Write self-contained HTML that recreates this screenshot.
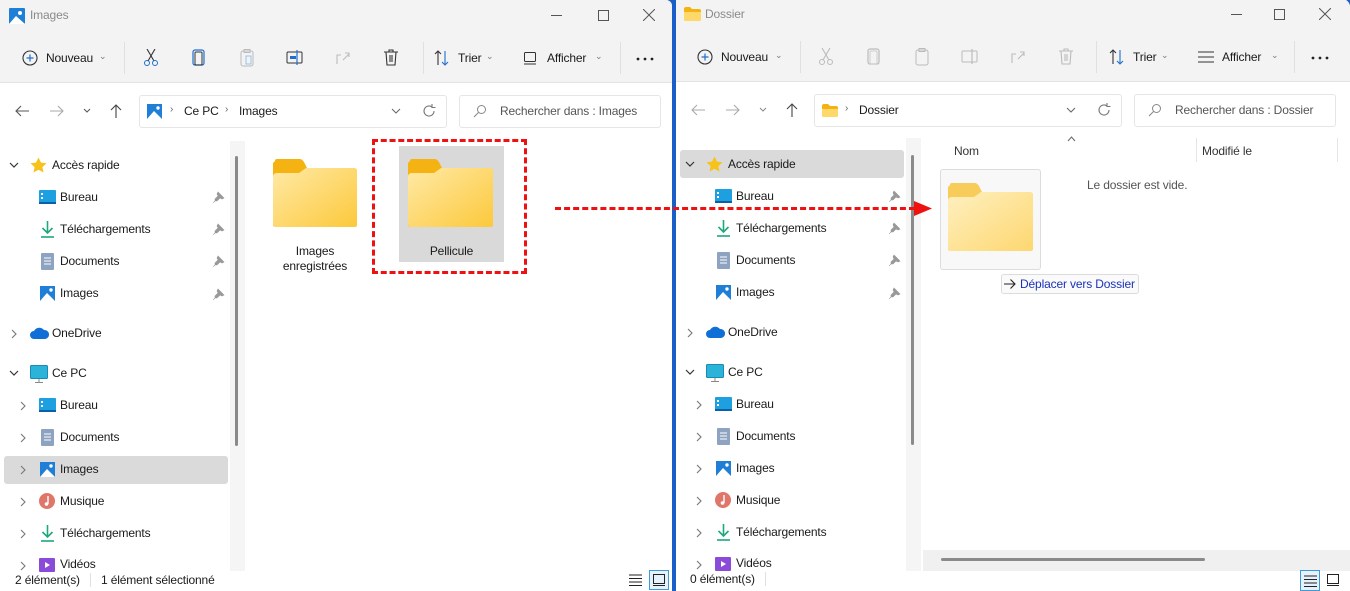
<!DOCTYPE html>
<html><head><meta charset="utf-8">
<style>
*{box-sizing:border-box;margin:0;padding:0}
body{width:1350px;height:591px;overflow:hidden;background:#1a5fc8;font-family:"Liberation Sans",sans-serif;font-size:12px;letter-spacing:-0.15px;color:#1a1a1a;position:relative}
.win{position:absolute;overflow:hidden;background:#fff}
.a{position:absolute;white-space:nowrap;margin-top:1px}
.bar{position:absolute;left:0;right:0;background:#f3f3f3}
.sep{position:absolute;width:1px;background:#e0e0e0}
svg{display:block}
.g{color:#7a7a7a}
</style></head><body>

<!-- ================= LEFT WINDOW ================= -->
<div class="win" style="left:0;top:0;width:672px;height:591px;border-top-right-radius:6px">
  <div class="bar" style="top:0;height:83px;border-bottom:1px solid #e3e3e3"></div>
  <div class="a" style="left:9px;top:7px"><svg width="16" height="16"><rect x="0" y="0" width="16" height="16" rx="1" fill="#1f7ed6"/><path d="M0 16 L7 8 L16 16Z" fill="#fff"/><circle cx="11" cy="5" r="2" fill="#fff"/></svg></div>
  <div class="a g" style="left:30px;top:7px;font-size:12px;color:#8a8a8a">Images</div>
  <div class="a" style="left:551px;top:14px;width:11px;height:1px;background:#555"></div>
  <div class="a" style="left:598px;top:9px;width:11px;height:11px;border:1px solid #555"></div>
  <div class="a" style="left:643px;top:8px"><svg width="12" height="12"><path d="M0 0L12 12M12 0L0 12" stroke="#555" stroke-width="1"/></svg></div>
  <div class="a" style="left:22px;top:49px"><svg width="16" height="16"><circle cx="8" cy="8" r="7" fill="none" stroke="#333" stroke-width="1.1"/><path d="M8 4.5V11.5M4.5 8H11.5" stroke="#1f6fd0" stroke-width="1.2"/></svg></div>
  <div class="a" style="left:46px;top:50px">Nouveau</div>
  <div class="a g" style="left:99px;top:50px;font-size:9px">&#8964;</div>
  <div class="sep" style="left:124px;top:42px;height:32px"></div>
  <div class="a" style="left:143px;top:48px"><svg width="16" height="18"><path d="M4 0L11 12M12 0L5 12" stroke="#333" stroke-width="1.1"/><circle cx="4" cy="14" r="2.5" fill="none" stroke="#1f6fd0"/><circle cx="12" cy="14" r="2.5" fill="none" stroke="#1f6fd0"/></svg></div>
  <div class="a" style="left:192px;top:48px"><svg width="14" height="18"><rect x="1" y="1" width="11" height="15" rx="2" fill="none" stroke="#1f6fd0" stroke-width="1.2"/><rect x="3" y="3" width="7" height="13" rx="1" fill="none" stroke="#333"/></svg></div>
  <div class="a" style="left:240px;top:48px"><svg width="14" height="18"><rect x="1" y="2" width="12" height="15" rx="2" fill="none" stroke="#bbb"/><rect x="4" y="0.5" width="6" height="3" fill="none" stroke="#bbb"/><rect x="6" y="7" width="5" height="8" fill="none" stroke="#9cc0ea"/></svg></div>
  <div class="a" style="left:286px;top:49px"><svg width="18" height="16"><rect x="1" y="2" width="15" height="11" rx="1" fill="none" stroke="#333"/><rect x="4" y="6" width="6" height="3" fill="#1f6fd0"/><path d="M11 0V15" stroke="#1f6fd0" stroke-width="1.2"/></svg></div>
  <div class="a" style="left:335px;top:49px"><svg width="16" height="16"><path d="M2 14V5H6M8 10L14 4M10 3H14V7" fill="none" stroke="#bbb" stroke-width="1.1"/></svg></div>
  <div class="a" style="left:384px;top:48px"><svg width="14" height="18"><path d="M0 3H14M5 3V1H9V3M2 3L3 16H11L12 3M6 6V13M8 6V13" fill="none" stroke="#333" stroke-width="1.1"/></svg></div>
  <div class="sep" style="left:423px;top:42px;height:32px"></div>
  <div class="a" style="left:434px;top:49px"><svg width="16" height="16"><path d="M4 15V1M1 4L4 1L7 4" fill="none" stroke="#333" stroke-width="1.1"/><path d="M11 1V15M8 12L11 15L14 12" fill="none" stroke="#1f6fd0" stroke-width="1.1"/></svg></div>
  <div class="a" style="left:458px;top:50px">Trier</div>
  <div class="a g" style="left:486px;top:50px;font-size:9px">&#8964;</div>
  <div class="a" style="left:523px;top:50px"><svg width="14" height="14"><rect x="1.5" y="1.5" width="11" height="9" rx="1" fill="none" stroke="#333"/><path d="M1 13H13" stroke="#333"/></svg></div>
  <div class="a" style="left:547px;top:50px">Afficher</div>
  <div class="a g" style="left:595px;top:50px;font-size:9px">&#8964;</div>
  <div class="sep" style="left:620px;top:42px;height:32px"></div>
  <div class="a" style="left:636px;top:56px"><svg width="18" height="4"><circle cx="2" cy="2" r="1.4" fill="#222"/><circle cx="9" cy="2" r="1.4" fill="#222"/><circle cx="16" cy="2" r="1.4" fill="#222"/></svg></div>
  <div class="a" style="left:14px;top:104px"><svg width="16" height="12"><path d="M15 6H2M7 1L2 6L7 11" fill="none" stroke="#555" stroke-width="1.1"/></svg></div>
  <div class="a" style="left:49px;top:104px"><svg width="16" height="12"><path d="M1 6H14M9 1L14 6L9 11" fill="none" stroke="#aaa" stroke-width="1.1"/></svg></div>
  <div class="a" style="left:83px;top:107px"><svg width="8" height="6"><path d="M1 1L4 4L7 1" fill="none" stroke="#555"/></svg></div>
  <div class="a" style="left:110px;top:102px"><svg width="12" height="16"><path d="M6 15V2M1 7L6 2L11 7" fill="none" stroke="#444" stroke-width="1.1"/></svg></div>
  <div class="a" style="left:139px;top:94px;width:308px;height:33px;border:1px solid #e5e5e5;border-radius:3px"></div>
  <div class="a" style="left:147px;top:103px"><svg width="15" height="15"><rect width="15" height="15" fill="#1f7ed6"/><path d="M0 15L7 7L15 15Z" fill="#fff"/><circle cx="11" cy="4" r="1.7" fill="#fff"/></svg></div>
  <div class="a g" style="left:170px;top:103px;font-size:10px;color:#666">&#8250;</div>
  <div class="a" style="left:184px;top:103px">Ce PC</div>
  <div class="a g" style="left:225px;top:103px;font-size:10px;color:#666">&#8250;</div>
  <div class="a" style="left:239px;top:103px">Images</div>
  <div class="a" style="left:391px;top:107px"><svg width="10" height="6"><path d="M1 1L5 5L9 1" fill="none" stroke="#666"/></svg></div>
  <div class="a" style="left:422px;top:103px"><svg width="14" height="14"><path d="M12 7A5 5 0 1 1 10 3M10 0V3.5H13.5" fill="none" stroke="#777" stroke-width="1.1"/></svg></div>
  <div class="a" style="left:459px;top:94px;width:202px;height:33px;border:1px solid #e5e5e5;border-radius:3px"></div>
  <div class="a" style="left:473px;top:103px"><svg width="14" height="14"><circle cx="8.5" cy="5.5" r="4" fill="none" stroke="#888"/><path d="M5.5 8.5L1 13" stroke="#888" stroke-width="1.1"/></svg></div>
  <div class="a" style="left:500px;top:103px;color:#555">Rechercher dans : Images</div>

  <div class="a" style="left:230px;top:140px;width:15px;height:430px;background:#f5f5f5"></div>
  <div class="a" style="left:235px;top:155px;width:3px;height:290px;background:#8a8a8a;border-radius:2px"></div>
  <div class="a" style="left:4px;top:455px;width:224px;height:28px;background:#dadada;border-radius:3px"></div>

  <div class="a" style="left:9px;top:161px"><svg width="10" height="7"><path d="M1 1L5 5L9 1" fill="none" stroke="#333" stroke-width="1.2"/></svg></div>
  <div class="a" style="left:30px;top:156px"><svg width="17" height="16"><path d="M8.5 0.5L11 5.6L16.5 6.3L12.4 10.1L13.5 15.5L8.5 12.8L3.5 15.5L4.6 10.1L0.5 6.3L6 5.6Z" fill="#f7c21a"/></svg></div>
  <div class="a" style="left:52px;top:157px">Accès rapide</div>
  <div class="a" style="left:39px;top:189px"><svg width="17" height="14"><rect width="17" height="14" rx="1" fill="#1d9fe0"/><rect x="2" y="3" width="2" height="2" fill="#fff"/><rect x="2" y="7" width="2" height="2" fill="#fff"/><rect x="0" y="12" width="17" height="2" fill="#0a5fa8"/></svg></div>
  <div class="a" style="left:60px;top:189px">Bureau</div>
  <div class="a" style="left:40px;top:220px"><svg width="15" height="17"><path d="M7.5 0V12M2.5 7L7.5 12L12.5 7" fill="none" stroke="#1fa77d" stroke-width="1.6"/><path d="M1 16H14" stroke="#1fa77d" stroke-width="1.6"/></svg></div>
  <div class="a" style="left:60px;top:221px">Téléchargements</div>
  <div class="a" style="left:41px;top:252px"><svg width="13" height="17"><rect width="13" height="17" rx="1" fill="#8ea3c1"/><path d="M3 5H10M3 8H10M3 11H10" stroke="#fff"/></svg></div>
  <div class="a" style="left:60px;top:253px">Documents</div>
  <div class="a" style="left:40px;top:285px"><svg width="15" height="15"><rect width="15" height="15" fill="#1f7ed6"/><path d="M0 15L7 7L15 15Z" fill="#fff"/><circle cx="11" cy="4" r="1.7" fill="#fff"/></svg></div>
  <div class="a" style="left:60px;top:285px">Images</div>
  <div class="a" style="left:213px;top:190px"><svg width="12" height="12"><path d="M5 1L11 7L9 8L7 7L4 10L2 10L2 8L5 5L4 3Z M2 10L0 12" fill="#999" stroke="#999" stroke-width="0.6"/></svg></div>
  <div class="a" style="left:213px;top:222px"><svg width="12" height="12"><path d="M5 1L11 7L9 8L7 7L4 10L2 10L2 8L5 5L4 3Z M2 10L0 12" fill="#999" stroke="#999" stroke-width="0.6"/></svg></div>
  <div class="a" style="left:213px;top:254px"><svg width="12" height="12"><path d="M5 1L11 7L9 8L7 7L4 10L2 10L2 8L5 5L4 3Z M2 10L0 12" fill="#999" stroke="#999" stroke-width="0.6"/></svg></div>
  <div class="a" style="left:213px;top:287px"><svg width="12" height="12"><path d="M5 1L11 7L9 8L7 7L4 10L2 10L2 8L5 5L4 3Z M2 10L0 12" fill="#999" stroke="#999" stroke-width="0.6"/></svg></div>
  <div class="a" style="left:11px;top:328px"><svg width="7" height="10"><path d="M1 1L5 5L1 9" fill="none" stroke="#777" stroke-width="1.1"/></svg></div>
  <div class="a" style="left:30px;top:326px"><svg width="19" height="12"><path d="M4 12A4 4 0 0 1 4 4A6 6 0 0 1 14 3A4.5 4.5 0 0 1 15 12Z" fill="#0f6fd6"/></svg></div>
  <div class="a" style="left:52px;top:325px">OneDrive</div>
  <div class="a" style="left:9px;top:369px"><svg width="10" height="7"><path d="M1 1L5 5L9 1" fill="none" stroke="#333" stroke-width="1.2"/></svg></div>
  <div class="a" style="left:30px;top:364px"><svg width="18" height="18"><rect x="0.5" y="0.5" width="17" height="13" rx="1" fill="#2bb3d9" stroke="#1a8bb5"/><path d="M9 14V17M5 17.5H13" stroke="#888"/></svg></div>
  <div class="a" style="left:52px;top:365px">Ce PC</div>
  <div class="a" style="left:20px;top:400px"><svg width="7" height="10"><path d="M1 1L5 5L1 9" fill="none" stroke="#777" stroke-width="1.1"/></svg></div>
  <div class="a" style="left:39px;top:397px"><svg width="17" height="14"><rect width="17" height="14" rx="1" fill="#1d9fe0"/><rect x="2" y="3" width="2" height="2" fill="#fff"/><rect x="2" y="7" width="2" height="2" fill="#fff"/><rect x="0" y="12" width="17" height="2" fill="#0a5fa8"/></svg></div>
  <div class="a" style="left:60px;top:397px">Bureau</div>
  <div class="a" style="left:20px;top:432px"><svg width="7" height="10"><path d="M1 1L5 5L1 9" fill="none" stroke="#777" stroke-width="1.1"/></svg></div>
  <div class="a" style="left:41px;top:428px"><svg width="13" height="17"><rect width="13" height="17" rx="1" fill="#8ea3c1"/><path d="M3 5H10M3 8H10M3 11H10" stroke="#fff"/></svg></div>
  <div class="a" style="left:60px;top:429px">Documents</div>
  <div class="a" style="left:20px;top:464px"><svg width="7" height="10"><path d="M1 1L5 5L1 9" fill="none" stroke="#777" stroke-width="1.1"/></svg></div>
  <div class="a" style="left:40px;top:461px"><svg width="15" height="15"><rect width="15" height="15" fill="#1f7ed6"/><path d="M0 15L7 7L15 15Z" fill="#fff"/><circle cx="11" cy="4" r="1.7" fill="#fff"/></svg></div>
  <div class="a" style="left:60px;top:461px">Images</div>
  <div class="a" style="left:20px;top:496px"><svg width="7" height="10"><path d="M1 1L5 5L1 9" fill="none" stroke="#777" stroke-width="1.1"/></svg></div>
  <div class="a" style="left:39px;top:492px"><svg width="16" height="16"><circle cx="8" cy="8" r="8" fill="#e0766a"/><path d="M9 3V11" stroke="#fff" stroke-width="1.4"/><circle cx="7.5" cy="11" r="1.8" fill="#fff"/></svg></div>
  <div class="a" style="left:60px;top:493px">Musique</div>
  <div class="a" style="left:20px;top:528px"><svg width="7" height="10"><path d="M1 1L5 5L1 9" fill="none" stroke="#777" stroke-width="1.1"/></svg></div>
  <div class="a" style="left:40px;top:524px"><svg width="15" height="17"><path d="M7.5 0V12M2.5 7L7.5 12L12.5 7" fill="none" stroke="#1fa77d" stroke-width="1.6"/><path d="M1 16H14" stroke="#1fa77d" stroke-width="1.6"/></svg></div>
  <div class="a" style="left:60px;top:525px">Téléchargements</div>
  <div class="a" style="left:20px;top:560px"><svg width="7" height="10"><path d="M1 1L5 5L1 9" fill="none" stroke="#777" stroke-width="1.1"/></svg></div>
  <div class="a" style="left:39px;top:557px"><svg width="16" height="14"><rect width="16" height="14" rx="1" fill="#8a4bd8"/><path d="M6 4L11 7L6 10Z" fill="#fff"/></svg></div>
  <div class="a" style="left:60px;top:556px">Vidéos</div>

  <div class="a" style="left:273px;top:158px"><svg width="84" height="68"><path d="M2 2Q2 0 4 0H27Q29 0 31 3L34 9H80Q84 9 84 12V66Q84 68 81 68H3Q0 68 0 66V4Z" fill="#f4b312"/><defs><linearGradient id="fg" x1="0" y1="0" x2="1" y2="1"><stop offset="0" stop-color="#ffe9a6"/><stop offset="1" stop-color="#fcc93b"/></linearGradient></defs><path d="M0 18Q0 14 4 14H26L33 9H81Q84 9 84 12V65Q84 68 81 68H3Q0 68 0 65Z" fill="url(#fg)"/></svg></div>
  <div class="a" style="left:265px;top:243px;width:100px;text-align:center;line-height:15px;white-space:normal">Images enregistrées</div>
  <div class="a" style="left:399px;top:145px;width:105px;height:116px;background:#d9d9d9"></div>
  <div class="a" style="left:408px;top:158px"><svg width="85" height="68"><path d="M2 2Q2 0 4 0H27Q29 0 31 3L34 9H81Q85 9 85 12V66Q85 68 82 68H3Q0 68 0 66V4Z" fill="#f4b312"/><path d="M0 18Q0 14 4 14H26L33 9H82Q85 9 85 12V65Q85 68 82 68H3Q0 68 0 65Z" fill="url(#fg)"/></svg></div>
  <div class="a" style="left:399px;top:243px;width:105px;text-align:center">Pellicule</div>
  <div class="a" style="left:372px;top:138px;width:155px;height:135px;border:3px dashed #ee1111"></div>

  <div class="a" style="left:15px;top:572px;font-size:12px">2 élément(s)</div>
  <div class="sep" style="left:90px;top:573px;height:14px"></div>
  <div class="a" style="left:101px;top:572px;font-size:12px">1 élément sélectionné</div>
  <div class="a" style="left:629px;top:573px"><svg width="13" height="12"><path d="M0 1H13M0 4.5H13M0 8H13M0 11.5H13" stroke="#222"/></svg></div>
  <div class="a" style="left:649px;top:569px;width:20px;height:20px;border:1px solid #3d9ad8;background:#e5f1fb"></div>
  <div class="a" style="left:653px;top:573px"><svg width="12" height="12"><rect x="0.5" y="0.5" width="11" height="9" fill="none" stroke="#222"/><path d="M0 11.5H12" stroke="#222"/></svg></div>
</div>

<!-- ================= RIGHT WINDOW ================= -->
<div class="win" style="left:676px;top:-1px;width:674px;height:592px;border-top-right-radius:8px">
  <div class="bar" style="top:0;height:83px;border-bottom:1px solid #e3e3e3"></div>
  <div class="a" style="left:8px;top:7px"><svg width="17" height="14"><path d="M0 2Q0 0 2 0H6L8 2H15Q17 2 17 4V12Q17 14 15 14H2Q0 14 0 12Z" fill="#f4b312"/><path d="M0 5H17V12Q17 14 15 14H2Q0 14 0 12Z" fill="#ffd86a"/></svg></div>
  <div class="a" style="left:29px;top:7px;font-size:12px;color:#8a8a8a">Dossier</div>
  <div class="a" style="left:555px;top:14px;width:11px;height:1px;background:#555"></div>
  <div class="a" style="left:598px;top:9px;width:11px;height:11px;border:1px solid #555"></div>
  <div class="a" style="left:643px;top:8px"><svg width="12" height="12"><path d="M0 0L12 12M12 0L0 12" stroke="#555" stroke-width="1"/></svg></div>
  <div class="a" style="left:21px;top:49px"><svg width="16" height="16"><circle cx="8" cy="8" r="7" fill="none" stroke="#333" stroke-width="1.1"/><path d="M8 4.5V11.5M4.5 8H11.5" stroke="#1f6fd0" stroke-width="1.2"/></svg></div>
  <div class="a" style="left:45px;top:50px">Nouveau</div>
  <div class="a g" style="left:99px;top:50px;font-size:9px">&#8964;</div>
  <div class="sep" style="left:124px;top:42px;height:32px"></div>
  <div class="a" style="left:142px;top:48px"><svg width="16" height="18"><path d="M4 0L11 12M12 0L5 12" stroke="#bbb" stroke-width="1.1"/><circle cx="4" cy="14" r="2.5" fill="none" stroke="#bbb"/><circle cx="12" cy="14" r="2.5" fill="none" stroke="#bbb"/></svg></div>
  <div class="a" style="left:191px;top:48px"><svg width="14" height="18"><rect x="1" y="1" width="11" height="15" rx="2" fill="none" stroke="#bbb" stroke-width="1.2"/><rect x="3" y="3" width="7" height="13" rx="1" fill="none" stroke="#ccc"/></svg></div>
  <div class="a" style="left:239px;top:48px"><svg width="14" height="18"><rect x="1" y="2" width="12" height="15" rx="2" fill="none" stroke="#bbb"/><rect x="4" y="0.5" width="6" height="3" fill="none" stroke="#bbb"/></svg></div>
  <div class="a" style="left:285px;top:49px"><svg width="18" height="16"><rect x="1" y="2" width="15" height="11" rx="1" fill="none" stroke="#bbb"/><path d="M11 0V15" stroke="#bbb" stroke-width="1.2"/></svg></div>
  <div class="a" style="left:334px;top:49px"><svg width="16" height="16"><path d="M2 14V5H6M8 10L14 4M10 3H14V7" fill="none" stroke="#bbb" stroke-width="1.1"/></svg></div>
  <div class="a" style="left:383px;top:48px"><svg width="14" height="18"><path d="M0 3H14M5 3V1H9V3M2 3L3 16H11L12 3M6 6V13M8 6V13" fill="none" stroke="#bbb" stroke-width="1.1"/></svg></div>
  <div class="sep" style="left:420px;top:42px;height:32px"></div>
  <div class="a" style="left:433px;top:49px"><svg width="16" height="16"><path d="M4 15V1M1 4L4 1L7 4" fill="none" stroke="#333" stroke-width="1.1"/><path d="M11 1V15M8 12L11 15L14 12" fill="none" stroke="#1f6fd0" stroke-width="1.1"/></svg></div>
  <div class="a" style="left:457px;top:50px">Trier</div>
  <div class="a g" style="left:485px;top:50px;font-size:9px">&#8964;</div>
  <div class="a" style="left:522px;top:51px"><svg width="16" height="12"><path d="M0 1H16M0 6H16M0 11H16" stroke="#333"/></svg></div>
  <div class="a" style="left:546px;top:50px">Afficher</div>
  <div class="a g" style="left:595px;top:50px;font-size:9px">&#8964;</div>
  <div class="sep" style="left:618px;top:42px;height:32px"></div>
  <div class="a" style="left:635px;top:56px"><svg width="18" height="4"><circle cx="2" cy="2" r="1.4" fill="#222"/><circle cx="9" cy="2" r="1.4" fill="#222"/><circle cx="16" cy="2" r="1.4" fill="#222"/></svg></div>
  <div class="a" style="left:14px;top:104px"><svg width="16" height="12"><path d="M15 6H2M7 1L2 6L7 11" fill="none" stroke="#aaa" stroke-width="1.1"/></svg></div>
  <div class="a" style="left:49px;top:104px"><svg width="16" height="12"><path d="M1 6H14M9 1L14 6L9 11" fill="none" stroke="#aaa" stroke-width="1.1"/></svg></div>
  <div class="a" style="left:83px;top:107px"><svg width="8" height="6"><path d="M1 1L4 4L7 1" fill="none" stroke="#888"/></svg></div>
  <div class="a" style="left:110px;top:102px"><svg width="12" height="16"><path d="M6 15V2M1 7L6 2L11 7" fill="none" stroke="#444" stroke-width="1.1"/></svg></div>
  <div class="a" style="left:138px;top:94px;width:308px;height:33px;border:1px solid #e5e5e5;border-radius:3px"></div>
  <div class="a" style="left:146px;top:104px"><svg width="16" height="13"><path d="M0 2Q0 0 2 0H6L8 2H14Q16 2 16 4V11Q16 13 14 13H2Q0 13 0 11Z" fill="#f4b312"/><path d="M0 5H16V11Q16 13 14 13H2Q0 13 0 11Z" fill="#ffd86a"/></svg></div>
  <div class="a" style="left:169px;top:103px;font-size:10px;color:#666">&#8250;</div>
  <div class="a" style="left:183px;top:103px">Dossier</div>
  <div class="a" style="left:390px;top:107px"><svg width="10" height="6"><path d="M1 1L5 5L9 1" fill="none" stroke="#666"/></svg></div>
  <div class="a" style="left:421px;top:103px"><svg width="14" height="14"><path d="M12 7A5 5 0 1 1 10 3M10 0V3.5H13.5" fill="none" stroke="#777" stroke-width="1.1"/></svg></div>
  <div class="a" style="left:458px;top:94px;width:202px;height:33px;border:1px solid #e5e5e5;border-radius:3px"></div>
  <div class="a" style="left:472px;top:103px"><svg width="14" height="14"><circle cx="8.5" cy="5.5" r="4" fill="none" stroke="#888"/><path d="M5.5 8.5L1 13" stroke="#888" stroke-width="1.1"/></svg></div>
  <div class="a" style="left:499px;top:103px;color:#555">Rechercher dans : Dossier</div>

  <div class="a" style="left:230px;top:138px;width:15px;height:433px;background:#f5f5f5"></div>
  <div class="a" style="left:235px;top:155px;width:3px;height:290px;background:#8a8a8a;border-radius:2px"></div>
  <div class="a" style="left:4px;top:150px;width:224px;height:28px;background:#dadada;border-radius:3px"></div>
  <div class="a" style="left:247px;top:550px;width:427px;height:21px;background:#f0f0f0"></div>
  <div class="a" style="left:265px;top:558px;width:264px;height:3px;background:#8a8a8a;border-radius:2px"></div>

  <div class="a" style="left:9px;top:161px"><svg width="10" height="7"><path d="M1 1L5 5L9 1" fill="none" stroke="#333" stroke-width="1.2"/></svg></div>
  <div class="a" style="left:30px;top:156px"><svg width="17" height="16"><path d="M8.5 0.5L11 5.6L16.5 6.3L12.4 10.1L13.5 15.5L8.5 12.8L3.5 15.5L4.6 10.1L0.5 6.3L6 5.6Z" fill="#f7c21a"/></svg></div>
  <div class="a" style="left:52px;top:157px">Accès rapide</div>
  <div class="a" style="left:39px;top:189px"><svg width="17" height="14"><rect width="17" height="14" rx="1" fill="#1d9fe0"/><rect x="2" y="3" width="2" height="2" fill="#fff"/><rect x="2" y="7" width="2" height="2" fill="#fff"/><rect x="0" y="12" width="17" height="2" fill="#0a5fa8"/></svg></div>
  <div class="a" style="left:60px;top:189px">Bureau</div>
  <div class="a" style="left:40px;top:220px"><svg width="15" height="17"><path d="M7.5 0V12M2.5 7L7.5 12L12.5 7" fill="none" stroke="#1fa77d" stroke-width="1.6"/><path d="M1 16H14" stroke="#1fa77d" stroke-width="1.6"/></svg></div>
  <div class="a" style="left:60px;top:221px">Téléchargements</div>
  <div class="a" style="left:41px;top:252px"><svg width="13" height="17"><rect width="13" height="17" rx="1" fill="#8ea3c1"/><path d="M3 5H10M3 8H10M3 11H10" stroke="#fff"/></svg></div>
  <div class="a" style="left:60px;top:253px">Documents</div>
  <div class="a" style="left:40px;top:285px"><svg width="15" height="15"><rect width="15" height="15" fill="#1f7ed6"/><path d="M0 15L7 7L15 15Z" fill="#fff"/><circle cx="11" cy="4" r="1.7" fill="#fff"/></svg></div>
  <div class="a" style="left:60px;top:285px">Images</div>
  <div class="a" style="left:213px;top:190px"><svg width="12" height="12"><path d="M5 1L11 7L9 8L7 7L4 10L2 10L2 8L5 5L4 3Z M2 10L0 12" fill="#999" stroke="#999" stroke-width="0.6"/></svg></div>
  <div class="a" style="left:213px;top:222px"><svg width="12" height="12"><path d="M5 1L11 7L9 8L7 7L4 10L2 10L2 8L5 5L4 3Z M2 10L0 12" fill="#999" stroke="#999" stroke-width="0.6"/></svg></div>
  <div class="a" style="left:213px;top:254px"><svg width="12" height="12"><path d="M5 1L11 7L9 8L7 7L4 10L2 10L2 8L5 5L4 3Z M2 10L0 12" fill="#999" stroke="#999" stroke-width="0.6"/></svg></div>
  <div class="a" style="left:213px;top:287px"><svg width="12" height="12"><path d="M5 1L11 7L9 8L7 7L4 10L2 10L2 8L5 5L4 3Z M2 10L0 12" fill="#999" stroke="#999" stroke-width="0.6"/></svg></div>
  <div class="a" style="left:11px;top:328px"><svg width="7" height="10"><path d="M1 1L5 5L1 9" fill="none" stroke="#777" stroke-width="1.1"/></svg></div>
  <div class="a" style="left:30px;top:326px"><svg width="19" height="12"><path d="M4 12A4 4 0 0 1 4 4A6 6 0 0 1 14 3A4.5 4.5 0 0 1 15 12Z" fill="#0f6fd6"/></svg></div>
  <div class="a" style="left:52px;top:325px">OneDrive</div>
  <div class="a" style="left:9px;top:369px"><svg width="10" height="7"><path d="M1 1L5 5L9 1" fill="none" stroke="#333" stroke-width="1.2"/></svg></div>
  <div class="a" style="left:30px;top:364px"><svg width="18" height="18"><rect x="0.5" y="0.5" width="17" height="13" rx="1" fill="#2bb3d9" stroke="#1a8bb5"/><path d="M9 14V17M5 17.5H13" stroke="#888"/></svg></div>
  <div class="a" style="left:52px;top:365px">Ce PC</div>
  <div class="a" style="left:20px;top:400px"><svg width="7" height="10"><path d="M1 1L5 5L1 9" fill="none" stroke="#777" stroke-width="1.1"/></svg></div>
  <div class="a" style="left:39px;top:397px"><svg width="17" height="14"><rect width="17" height="14" rx="1" fill="#1d9fe0"/><rect x="2" y="3" width="2" height="2" fill="#fff"/><rect x="2" y="7" width="2" height="2" fill="#fff"/><rect x="0" y="12" width="17" height="2" fill="#0a5fa8"/></svg></div>
  <div class="a" style="left:60px;top:397px">Bureau</div>
  <div class="a" style="left:20px;top:432px"><svg width="7" height="10"><path d="M1 1L5 5L1 9" fill="none" stroke="#777" stroke-width="1.1"/></svg></div>
  <div class="a" style="left:41px;top:428px"><svg width="13" height="17"><rect width="13" height="17" rx="1" fill="#8ea3c1"/><path d="M3 5H10M3 8H10M3 11H10" stroke="#fff"/></svg></div>
  <div class="a" style="left:60px;top:429px">Documents</div>
  <div class="a" style="left:20px;top:464px"><svg width="7" height="10"><path d="M1 1L5 5L1 9" fill="none" stroke="#777" stroke-width="1.1"/></svg></div>
  <div class="a" style="left:40px;top:461px"><svg width="15" height="15"><rect width="15" height="15" fill="#1f7ed6"/><path d="M0 15L7 7L15 15Z" fill="#fff"/><circle cx="11" cy="4" r="1.7" fill="#fff"/></svg></div>
  <div class="a" style="left:60px;top:461px">Images</div>
  <div class="a" style="left:20px;top:496px"><svg width="7" height="10"><path d="M1 1L5 5L1 9" fill="none" stroke="#777" stroke-width="1.1"/></svg></div>
  <div class="a" style="left:39px;top:492px"><svg width="16" height="16"><circle cx="8" cy="8" r="8" fill="#e0766a"/><path d="M9 3V11" stroke="#fff" stroke-width="1.4"/><circle cx="7.5" cy="11" r="1.8" fill="#fff"/></svg></div>
  <div class="a" style="left:60px;top:493px">Musique</div>
  <div class="a" style="left:20px;top:528px"><svg width="7" height="10"><path d="M1 1L5 5L1 9" fill="none" stroke="#777" stroke-width="1.1"/></svg></div>
  <div class="a" style="left:40px;top:524px"><svg width="15" height="17"><path d="M7.5 0V12M2.5 7L7.5 12L12.5 7" fill="none" stroke="#1fa77d" stroke-width="1.6"/><path d="M1 16H14" stroke="#1fa77d" stroke-width="1.6"/></svg></div>
  <div class="a" style="left:60px;top:525px">Téléchargements</div>
  <div class="a" style="left:20px;top:560px"><svg width="7" height="10"><path d="M1 1L5 5L1 9" fill="none" stroke="#777" stroke-width="1.1"/></svg></div>
  <div class="a" style="left:39px;top:557px"><svg width="16" height="14"><rect width="16" height="14" rx="1" fill="#8a4bd8"/><path d="M6 4L11 7L6 10Z" fill="#fff"/></svg></div>
  <div class="a" style="left:60px;top:556px">Vidéos</div>

  <div class="a" style="left:278px;top:144px;color:#333">Nom</div>
  <div class="a" style="left:391px;top:136px"><svg width="9" height="6"><path d="M1 5L4.5 1L8 5" fill="none" stroke="#666"/></svg></div>
  <div class="sep" style="left:520px;top:139px;height:24px;background:#e5e5e5"></div>
  <div class="a" style="left:526px;top:144px;color:#333">Modifié le</div>
  <div class="sep" style="left:661px;top:139px;height:24px;background:#e5e5e5"></div>
  <div class="a" style="left:411px;top:178px;color:#555;font-size:12px">Le dossier est vide.</div>

  <div class="a" style="left:264px;top:169px;width:101px;height:101px;background:#f8f8f8;border:1px solid #dcdcdc;border-radius:3px"></div>
  <div class="a" style="left:272px;top:183px"><svg width="85" height="68"><path d="M2 2Q2 0 4 0H27Q29 0 31 3L34 9H81Q85 9 85 12V66Q85 68 82 68H3Q0 68 0 66V4Z" fill="#f8cc5a"/><defs><linearGradient id="fg2" x1="0" y1="0" x2="1" y2="1"><stop offset="0" stop-color="#fff0c0"/><stop offset="1" stop-color="#fdd770"/></linearGradient></defs><path d="M0 18Q0 14 4 14H26L33 9H82Q85 9 85 12V65Q85 68 82 68H3Q0 68 0 65Z" fill="url(#fg2)"/></svg></div>
  <div class="a" style="left:325px;top:274px;width:138px;height:20px;background:#fafafa;border:1px solid #dcdcdc;border-radius:3px"></div>
  <div class="a" style="left:328px;top:279px"><svg width="12" height="10"><path d="M0 5H11M6.5 0.5L11 5L6.5 9.5" fill="none" stroke="#222" stroke-width="1.1"/></svg></div>
  <div class="a" style="left:344px;top:277px;color:#1a32b8;font-size:12px">Déplacer vers Dossier</div>

  <div class="a" style="left:14px;top:572px;font-size:12px">0 élément(s)</div>
  <div class="sep" style="left:89px;top:573px;height:14px"></div>
  <div class="a" style="left:624px;top:570px;width:20px;height:21px;border:1px solid #3d9ad8;background:#e5f1fb"></div>
  <div class="a" style="left:628px;top:575px"><svg width="13" height="12"><path d="M0 1H13M0 4.5H13M0 8H13M0 11.5H13" stroke="#222"/></svg></div>
  <div class="a" style="left:651px;top:574px"><svg width="12" height="12"><rect x="0.5" y="0.5" width="11" height="9" fill="none" stroke="#222"/><path d="M0 11.5H12" stroke="#222"/></svg></div>
</div>

<div class="a" style="left:555px;top:206px;width:360px;height:0;border-top:3px dashed #ee1111"></div>
<div class="a" style="left:914px;top:200px"><svg width="18" height="15"><path d="M0 0L18 7.5L0 15Z" fill="#ee1111"/></svg></div>
</body></html>
